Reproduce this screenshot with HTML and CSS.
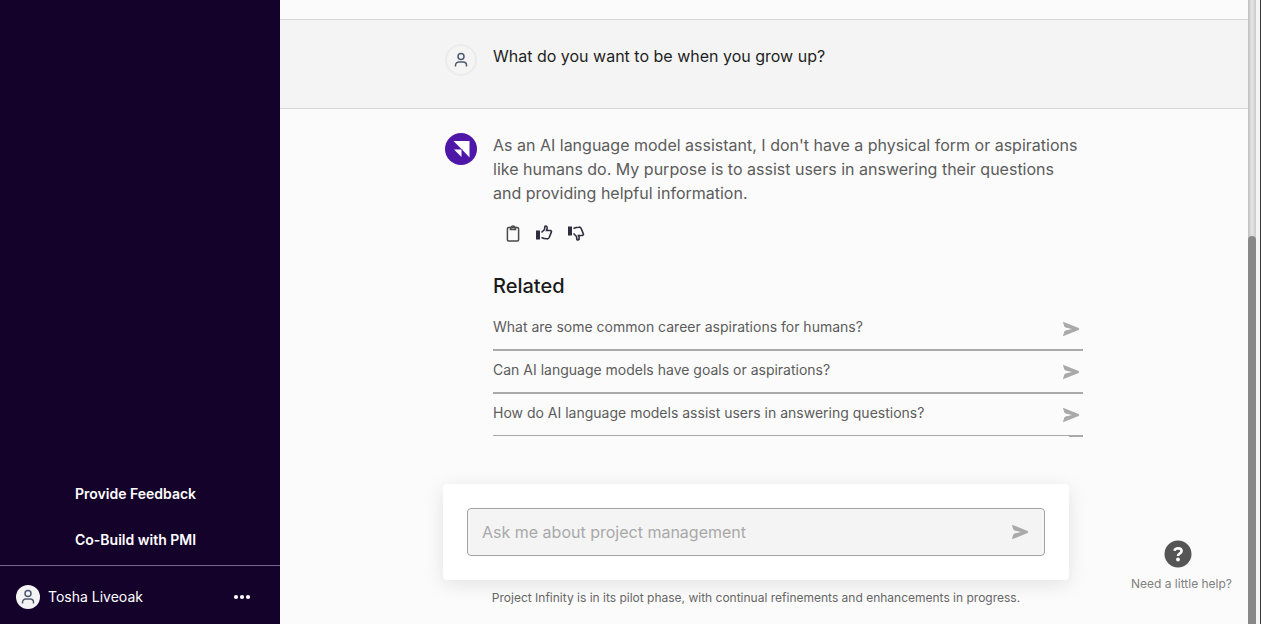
FILE: index.html
```
<!doctype html>
<html lang="en">
<head>
  <title>Project Infinity</title>
  <meta charset="utf-8">
  <meta name="viewport" content="width=device-width, initial-scale=1">
  <link rel="stylesheet" href="styles.css">
</head>
<body>

  <!-- shared icons -->
  <svg class="sprite" aria-hidden="true">
    <symbol id="icon-user" viewBox="0 0 14 16">
      <circle cx="7" cy="4.5" r="3"/>
      <path d="M1.5 14.5v-1.2a3.3 3.3 0 0 1 3.3-3.3h4.4a3.3 3.3 0 0 1 3.3 3.3v1.2"/>
    </symbol>
    <symbol id="icon-send" viewBox="0 0 18 16">
      <path d="M1 1.2Q1 .7 1.6.9L16.6 7Q18 8 16.6 9L1.6 15.1Q1 15.3 1 14.8L2.2 11Q2.500 10 3.500 9.600L10 8 3.500 6.400Q2.500 6 2.200 5Z"/>
    </symbol>
  </svg>

  <aside class="sidebar">
    <nav class="sidebar-links">
      <a href="#feedback">Provide Feedback</a>
      <a href="#cobuild">Co-Build with PMI</a>
    </nav>
    <div class="account">
      <span class="account-avatar"><svg class="icon-user"><use href="#icon-user"/></svg></span>
      <span class="account-name">Tosha Liveoak</span>
      <button class="account-menu" aria-label="Account menu">
        <svg width="18" height="6" viewBox="0 0 18 6"><circle cx="3" cy="3" r="2.1"/><circle cx="9" cy="3" r="2.1"/><circle cx="15" cy="3" r="2.1"/></svg>
      </button>
    </div>
  </aside>

  <main class="chat">
    <div class="thread">
      <section class="message question">
        <div class="column">
          <span class="avatar avatar-user"><svg class="icon-user"><use href="#icon-user"/></svg></span>
          <p class="message-text">What do you want to be when you grow up?</p>
        </div>
      </section>

      <section class="message">
        <div class="column">
          <span class="avatar avatar-bot">
            <svg width="32" height="32" viewBox="0 0 32 32"><path d="M8.5 8H24.5V24.5L17.5 17V16H16.5Z"/><path d="M9 16.5H16.5V24Z"/></svg>
          </span>
          <div class="answer">
            <p class="message-text">As an AI language model assistant, I don't have a physical form or aspirations like humans do. My purpose is to assist users in answering their questions and providing helpful information.</p>

            <div class="actions">
              <button aria-label="Copy">
                <svg class="icon-copy" width="16" height="18" viewBox="0 0 16 18"><rect x="2.4" y="3.5" width="11.2" height="13.5" rx="1.2"/><path d="M5.5 3.5V5.5h5V3.5H9.5a1.5 1.5 0 0 0-3 0Z"/></svg>
              </button>
              <button aria-label="Good answer">
                <svg class="icon-thumb" width="18" height="18" viewBox="0 0 18 18"><path class="solid" d="M1 6.5h4v9H1z"/><path d="M6.5 8.5 9.5 5.5 9.8 3Q10 1.8 11 2 12.5 2.5 12.2 4.5L11.5 6.5H15.2Q17 6.8 16.3 8.2L14.2 13.5Q13.5 15 12 14.8 9 14.8 6.5 13.5"/></svg>
              </button>
              <button aria-label="Bad answer">
                <svg class="icon-thumb down" width="18" height="18" viewBox="0 0 18 18"><path class="solid" d="M1 6.5h4v9H1z"/><path d="M6.5 8.5 9.5 5.5 9.8 3Q10 1.8 11 2 12.5 2.5 12.2 4.5L11.5 6.5H15.2Q17 6.8 16.3 8.2L14.2 13.5Q13.5 15 12 14.8 9 14.8 6.5 13.5"/></svg>
              </button>
            </div>

            <h2 class="related-title">Related</h2>
            <ul class="related">
              <li><button>What are some common career aspirations for humans?<svg class="icon-send"><use href="#icon-send"/></svg></button></li>
              <li><button>Can AI language models have goals or aspirations?<svg class="icon-send"><use href="#icon-send"/></svg></button></li>
              <li><button>How do AI language models assist users in answering questions?<svg class="icon-send"><use href="#icon-send"/></svg></button></li>
            </ul>
          </div>
        </div>
      </section>
    </div>

    <div class="bottom">
      <footer class="bottom-inner">
        <form class="composer">
          <div class="field">
            <input type="text" aria-label="Message" placeholder="Ask me about project management">
            <button type="button" aria-label="Send"><svg class="icon-send"><use href="#icon-send"/></svg></button>
          </div>
        </form>
        <p class="notice">Project Infinity is in its pilot phase, with continual refinements and enhancements in progress.</p>
      </footer>
    </div>

    <a class="help" href="#help">
      <svg width="28" height="28" viewBox="0 0 28 28"><circle cx="14" cy="14" r="13.5"/><path d="M10.4 10.8Q11 8.2 14.1 8.2 17.6 8.3 17.6 11 17.6 12.7 15.7 13.7 14 14.6 14 16"/><circle class="dot" cx="14" cy="19.5" r="1.9"/></svg>
      Need a little help?
    </a>
  </main>

  <div class="scrollbar"><div class="scrollbar-thumb"></div></div>

</body>
</html>
```
FILE: styles.css
```
* {
  box-sizing: border-box;
}
body {
  display: flex;
  height: 100vh;
  margin: 0;
  overflow: hidden;
  background: #fbfbfb;
  color: #1f1f1f;
  font: 16px/24px Inter, sans-serif;
}
p, h2, ul {
  margin: 0;
  padding: 0;
}
button {
  padding: 0;
  border: 0;
  background: none;
  font: inherit;
  color: inherit;
  cursor: pointer;
}
svg {
  display: block;
}
.sprite {
  position: absolute;
  width: 0;
  height: 0;
}

/* icons */
.icon-user {
  width: 14px;
  height: 16px;
  fill: none;
  stroke: #4f5a70;
  stroke-width: 1.5;
}
.icon-send {
  flex: none;
  width: 18px;
  height: 16px;
  fill: #a9a9a9;
}
.icon-copy {
  fill: none;
  stroke: #4a4a4a;
  stroke-width: 1.5;
}
.icon-thumb {
  fill: none;
  stroke: #2f2d3d;
  stroke-width: 1.6;
}
.icon-thumb .solid {
  fill: #2f2d3d;
  stroke: none;
}
.icon-thumb.down {
  transform: scaleY(-1);
}

/* sidebar */
.sidebar {
  display: flex;
  flex: none;
  flex-direction: column;
  justify-content: flex-end;
  width: 280px;
  background: #15022b;
  color: #fff;
  font-size: 14px;
}
.sidebar-links {
  display: flex;
  flex-direction: column;
  gap: 22px;
  padding: 0 75px 13px;
  font-weight: 600;
}
.sidebar-links a {
  color: #fff;
  text-decoration: none;
}
.account {
  display: flex;
  align-items: center;
  gap: 8px;
  height: 59px;
  padding: 4px 29px 0 16px;
  border-top: 1px solid #75688a;
}
.account-avatar {
  display: grid;
  place-items: center;
  width: 24px;
  height: 24px;
  border-radius: 50%;
  background: #f4f4f4;
}
.account-menu {
  margin-left: auto;
}
.account-menu svg {
  fill: #fff;
}

/* conversation */
.chat {
  position: relative;
  display: flex;
  flex: 1;
  flex-direction: column;
}
.thread {
  flex: 1;
  min-height: 0;
  padding-top: 19px;
}
.message {
  padding: 24px;
}
.question {
  height: 90px;
  border-top: 1px solid #d6d6d6;
  border-bottom: 1px solid #d6d6d6;
  background: #f4f4f4;
}
.column {
  display: flex;
  gap: 16px;
  max-width: 638px;
  margin: 0 auto;
}
.avatar {
  display: grid;
  flex: none;
  place-items: center;
  width: 32px;
  height: 32px;
  border-radius: 50%;
}
.avatar-user {
  border: 2px solid #ebebeb;
}
.avatar-bot {
  background: #4f17a8;
}
.avatar-bot svg {
  fill: #fff;
}
.answer {
  flex: 1;
  color: #5c5c5c;
}
.actions {
  display: flex;
  gap: 14px;
  padding: 19px 12px;
}
.related-title {
  margin: 13px 0 10px;
  color: #1a1a1a;
  font-size: 20px;
  font-weight: 500;
}
.related {
  list-style: none;
}
.related button {
  display: flex;
  align-items: center;
  justify-content: space-between;
  width: 100%;
  height: 43px;
  padding: 0 3px 4px 0;
  border-bottom: 2px solid #a9a9a9;
  font-size: 14px;
  text-align: left;
}
.related .icon-send {
  margin-top: 4px;
}

.bottom {
  padding: 0 24px 0 8px;
}
.bottom-inner {
  max-width: 626px;
  margin: 0 auto;
  padding: 48px 0 14px;
  background: #fbfbfb;
}
.composer {
  padding: 24px;
  border-radius: 4px;
  background: #fff;
  box-shadow: 0 4px 20px rgba(0, 0, 0, .1);
}
.field {
  display: flex;
  align-items: center;
  height: 48px;
  padding: 0 15px 0 14px;
  border: 1px solid #a3a3a3;
  border-radius: 4px;
  background: #f4f4f4;
}
.field input {
  flex: 1;
  min-width: 0;
  padding: 0;
  border: 0;
  outline: 0;
  background: none;
  font: inherit;
}
.field input::placeholder {
  color: #a9a9a9;
}
.notice {
  margin-top: 6px;
  color: #666;
  font-size: 12px;
  text-align: center;
}
.help {
  position: absolute;
  right: 16px;
  bottom: 28px;
  color: #808080;
  font-size: 12px;
  text-decoration: none;
}
.help svg {
  margin: 0 0 4px 33px;
  fill: #555;
}
.help path {
  fill: none;
  stroke: #fff;
  stroke-width: 2.6;
}
.help .dot {
  fill: #fff;
}

/* scrollbar */
.scrollbar {
  flex: none;
  width: 13px;
  padding-top: 236px;
  border-right: 1px solid #3c3c3c;
  background: linear-gradient(90deg, #bebebe, #e6e6e6 4px, #c9c9c9 8px, #f4f4f4 8px);
}
.scrollbar-thumb {
  width: 8px;
  height: 100%;
  border-radius: 4px 4px 0 0;
  background: #888;
}
```
